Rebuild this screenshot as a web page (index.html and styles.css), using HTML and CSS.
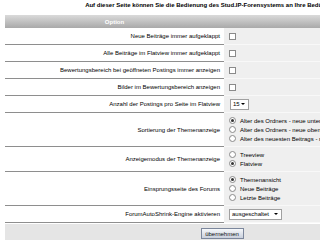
FILE: index.html
```html
<!DOCTYPE html>
<html lang="de">
<head>
    <meta charset="UTF-8">
    <title>Forum Einstellungen</title>
    <link rel="stylesheet" href="styles.css">
</head>
<body>
    <div class="page">
        <p class="intro">Auf dieser Seite können Sie die Bedienung des Stud.IP-Forensystems an Ihre Bedürfnisse anpassen.</p>
        <form class="settings">
            <div class="head">
                <div class="head-cell">Option</div>
                <div class="head-cell"></div>
            </div>

            <div class="row">
                <div class="label">Neue Beiträge immer aufgeklappt</div>
                <div class="value"><span class="check"></span></div>
            </div>
            <div class="row">
                <div class="label">Alle Beiträge im Flatview immer aufgeklappt</div>
                <div class="value"><span class="check"></span></div>
            </div>
            <div class="row">
                <div class="label">Bewertungsbereich bei geöffneten Postings immer anzeigen</div>
                <div class="value"><span class="check"></span></div>
            </div>
            <div class="row">
                <div class="label">Bilder im Bewertungsbereich anzeigen</div>
                <div class="value"><span class="check"></span></div>
            </div>
            <div class="row">
                <div class="label">Anzahl der Postings pro Seite im Flatview</div>
                <div class="value"><span class="select select-small">15 <i class="arrow"></i></span></div>
            </div>
            <div class="row row-tall">
                <div class="label">Sortierung der Themenanzeige</div>
                <div class="value options">
                    <span class="option"><span class="radio on"></span>Alter des Ordners - neue unten</span>
                    <span class="option"><span class="radio"></span>Alter des Ordners - neue oben</span>
                    <span class="option"><span class="radio"></span>Alter des neuesten Beitrags - neue oben</span>
                </div>
            </div>
            <div class="row row-mid">
                <div class="label">Anzeigemodus der Themenanzeige</div>
                <div class="value options">
                    <span class="option"><span class="radio"></span>Treeview</span>
                    <span class="option"><span class="radio on"></span>Flatview</span>
                </div>
            </div>
            <div class="row row-tall">
                <div class="label">Einsprungsseite des Forums</div>
                <div class="value options">
                    <span class="option"><span class="radio on"></span>Themenansicht</span>
                    <span class="option"><span class="radio"></span>Neue Beiträge</span>
                    <span class="option"><span class="radio"></span>Letzte Beiträge</span>
                </div>
            </div>
            <div class="row">
                <div class="label">ForumAutoShrink-Engine aktivieren</div>
                <div class="value"><span class="select select-wide">ausgeschaltet <i class="arrow"></i></span></div>
            </div>

            <div class="footer">
                <span class="btn">übernehmen</span>
            </div>
        </form>
    </div>
</body>
</html>
```

FILE: styles.css
```css
body {
    margin: 0;
    font-family: "Liberation Sans", Arial, sans-serif;
    font-size: 6px;
    color: #000;
    background: #fff;
}

.page {
    width: 434px;
    padding: 1px 0 0 5px;
}

.intro {
    margin: 0 0 5px 14px;
    line-height: 9px;
    text-align: center;
    font-weight: bold;
    white-space: nowrap;
}

.head {
    display: grid;
    grid-template-columns: 219px 1fr;
    height: 13px;
    background: linear-gradient(#dadada, #a9a9a9);
}

.head-cell {
    display: flex;
    align-items: center;
    justify-content: center;
    color: #fff;
    font-weight: bold;
}

.row {
    display: grid;
    grid-template-columns: 219px 1fr;
    height: 17px;
}

.row-tall {
    height: 34px;
}

.row-mid {
    height: 25px;
}

.label {
    display: flex;
    align-items: center;
    justify-content: flex-end;
    padding-right: 4px;
    border-bottom: 1px solid #8e8e8e;
    white-space: nowrap;
}

.value {
    display: flex;
    align-items: center;
    padding-left: 5px;
    background: #efefef;
    border-bottom: 1px solid #f8f8f8;
    white-space: nowrap;
}

.options {
    flex-direction: column;
    align-items: flex-start;
    justify-content: center;
}

.option {
    display: flex;
    align-items: center;
    height: 9px;
}

.check {
    width: 5px;
    height: 5px;
    border: 1px solid #8a8a8a;
    background: #fff;
}

.radio {
    width: 5px;
    height: 5px;
    margin-right: 4px;
    border: 1px solid #8a8a8a;
    border-radius: 50%;
    background: #fff;
    position: relative;
}

.radio.on::after {
    content: "";
    position: absolute;
    left: 1px;
    top: 1px;
    width: 3px;
    height: 3px;
    border-radius: 50%;
    background: #333;
}

.select {
    display: flex;
    align-items: center;
    justify-content: space-between;
    height: 9px;
    padding: 0 3px 0 2px;
    border: 1px solid #a0a0a0;
    background: #fff;
}

.select-small {
    width: 12px;
    margin-left: 1px;
}

.select-wide {
    width: 46px;
}

.arrow {
    width: 0;
    height: 0;
    border-left: 2px solid transparent;
    border-right: 2px solid transparent;
    border-top: 2px solid #000;
}

.footer {
    display: flex;
    justify-content: center;
    align-items: flex-start;
    height: 20px;
    padding-top: 4px;
    margin-top: 1px;
    background: #e5e5e5;
}

.btn {
    display: flex;
    align-items: center;
    justify-content: center;
    width: 41px;
    height: 9px;
    border: 1px solid #7c879c;
    background: linear-gradient(#f6f8fb, #c9d0dc);
    color: #111;
}
```
